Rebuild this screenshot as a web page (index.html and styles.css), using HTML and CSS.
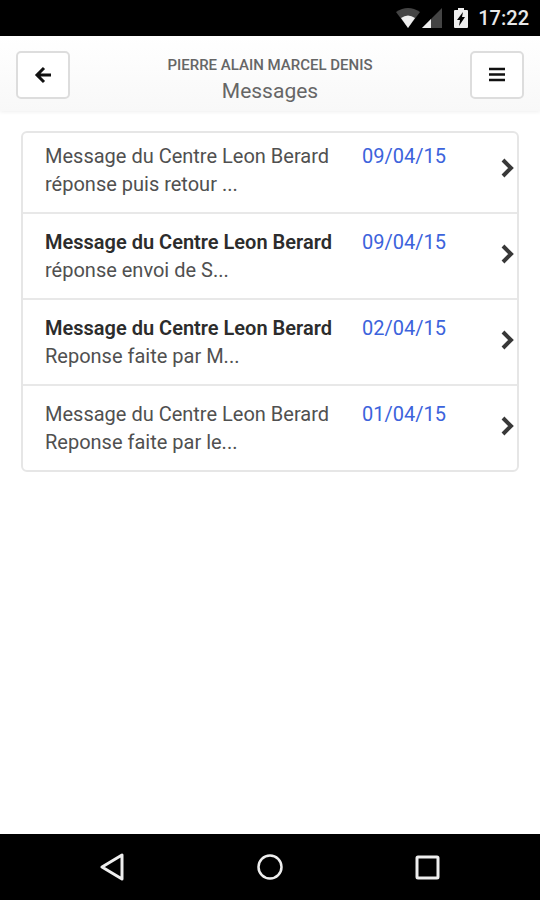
FILE: index.html
```html
<!DOCTYPE html>
<html lang="fr">
<head>
<meta charset="utf-8">
<meta name="viewport" content="width=device-width, initial-scale=1">
<title>Messages</title>
<link rel="stylesheet" href="styles.css">
</head>
<body>
<div class="status">
  <svg class="wifi" width="24" height="20" viewBox="0 0 24 20" aria-hidden="true">
    <path fill="#444" d="M0 4Q12-4 24 4L12 20Z"/>
    <path fill="#eee" d="M5 10Q12 5 19 10L12 20Z"/>
  </svg>
  <svg class="signal" width="20" height="20" viewBox="0 0 20 20" aria-hidden="true">
    <path fill="#444" d="M20 0V20H0Z"/>
    <path fill="#eee" d="M9 11V20H0Z"/>
  </svg>
  <svg class="battery" width="14" height="20" viewBox="0 0 14 20" aria-hidden="true">
    <path fill="#eee" d="M4 0H10V2H13Q14 2 14 3V19Q14 20 13 20H1Q0 20 0 19V3Q0 2 1 2H4Z"/>
    <path fill="#000" d="M9 4L3 12H6L5 18L11 9H8Z"/>
  </svg>
  <time class="clock">17:22</time>
</div>
<header class="bar">
  <button class="btn" type="button" aria-label="Retour">
    <svg width="18" height="18" viewBox="0 0 18 18" aria-hidden="true"><path d="M10 2L3 9L10 16M3 9H17" fill="none" stroke="#111" stroke-width="3"/></svg>
  </button>
  <div class="heading">
    <p class="patient">PIERRE ALAIN MARCEL DENIS</p>
    <h1 class="title">Messages</h1>
  </div>
  <button class="btn" type="button" aria-label="Menu">
    <svg width="18" height="18" viewBox="0 0 18 18" aria-hidden="true"><path d="M1 3H17M1 8.500H17M1 14H17" fill="none" stroke="#111" stroke-width="2.500"/></svg>
  </button>
</header>
<main class="content">
  <ul class="list">
    <li><a class="row" href="#m1">
      <span class="sender">Message du Centre Leon Berard</span><time class="date">09/04/15</time>
      <svg class="chevron" width="14" height="24" viewBox="0 0 14 24" aria-hidden="true"><path d="M2 2L10 10L2 18" fill="none" stroke="#383838" stroke-width="4"/></svg>
      <span class="preview">réponse puis retour ...</span>
    </a></li>
    <li><a class="row unread" href="#m2">
      <span class="sender">Message du Centre Leon Berard</span><time class="date">09/04/15</time>
      <svg class="chevron" width="14" height="24" viewBox="0 0 14 24" aria-hidden="true"><path d="M2 2L10 10L2 18" fill="none" stroke="#383838" stroke-width="4"/></svg>
      <span class="preview">réponse envoi de S...</span>
    </a></li>
    <li><a class="row unread" href="#m3">
      <span class="sender">Message du Centre Leon Berard</span><time class="date">02/04/15</time>
      <svg class="chevron" width="14" height="24" viewBox="0 0 14 24" aria-hidden="true"><path d="M2 2L10 10L2 18" fill="none" stroke="#383838" stroke-width="4"/></svg>
      <span class="preview">Reponse faite par M...</span>
    </a></li>
    <li><a class="row" href="#m4">
      <span class="sender">Message du Centre Leon Berard</span><time class="date">01/04/15</time>
      <svg class="chevron" width="14" height="24" viewBox="0 0 14 24" aria-hidden="true"><path d="M2 2L10 10L2 18" fill="none" stroke="#383838" stroke-width="4"/></svg>
      <span class="preview">Reponse faite par le...</span>
    </a></li>
  </ul>
</main>
<nav class="softkeys" aria-label="Navigation">
  <button class="key" type="button" aria-label="Précédent">
    <svg width="28" height="28" viewBox="0 0 28 28" aria-hidden="true"><path d="M23 2V26L3 14Z" fill="none" stroke="#eee" stroke-width="3" stroke-linejoin="round"/></svg>
  </button>
  <button class="key" type="button" aria-label="Accueil">
    <svg width="28" height="28" viewBox="0 0 28 28" aria-hidden="true"><circle cx="14" cy="14" r="11.500" fill="none" stroke="#eee" stroke-width="2.500"/></svg>
  </button>
  <button class="key" type="button" aria-label="Récents">
    <svg width="28" height="28" viewBox="0 0 28 28" aria-hidden="true"><rect x="4" y="4" width="21" height="21" rx="1" fill="none" stroke="#eee" stroke-width="3"/></svg>
  </button>
</nav>
</body>
</html>
```
FILE: styles.css
```css
* {
  box-sizing: border-box;
}

body {
  margin: 0;
  min-height: 100vh;
  display: flex;
  flex-direction: column;
  background: #fff;
  color: #505050;
  font-family: Roboto, sans-serif;
  font-size: 20px;
  line-height: 28px;
}

svg {
  display: block;
}

.status {
  display: flex;
  align-items: center;
  justify-content: flex-end;
  height: 36px;
  padding: 0 11px;
  background: #000;
}

.signal {
  margin-left: 2px;
}

.battery {
  margin-left: 12px;
}

.clock {
  margin-left: 10px;
  color: #e8e8e8;
  font-weight: 500;
}

.bar {
  display: flex;
  align-items: center;
  justify-content: space-between;
  height: 75px;
  padding: 3px 16px 0;
  background: linear-gradient(#fff, #f8f8f8);
  box-shadow: 0 1px 4px #0001;
}

.btn {
  display: flex;
  align-items: center;
  justify-content: center;
  width: 54px;
  height: 48px;
  padding: 0;
  border: 2px solid #ddd;
  border-radius: 5px;
  background: #fff;
}

.heading {
  padding-top: 8px;
  text-align: center;
}

.patient,
.title {
  margin: 0;
  color: #666;
}

.patient {
  font-size: 15px;
  font-weight: 500;
  line-height: 24px;
}

.title {
  font-size: 21px;
  font-weight: 400;
  line-height: 28px;
}

.content {
  flex: 1;
  padding: 20px 21px;
}

.list {
  margin: 0;
  padding: 0;
  list-style: none;
  border: 2px solid #e6e6e6;
  border-radius: 6px;
}

.list li + li {
  border-top: 2px solid #e8e8e8;
}

.row {
  display: grid;
  grid-template-columns: 317px 1fr 14px;
  align-items: center;
  padding: 14px 2px 14px 22px;
  color: inherit;
  text-decoration: none;
}

.list li:first-child .row {
  padding-top: 9px;
}

.unread .sender {
  color: #2c2c2c;
  font-weight: 600;
}

.date {
  color: #3c63dc;
}

.chevron {
  grid-column: 3;
  grid-row: 1 / 3;
}

.preview {
  grid-column: 1 / 3;
}

.softkeys {
  display: grid;
  grid-template-columns: repeat(3, 1fr);
  height: 66px;
  padding: 0 35px;
  background: #000;
}

.key {
  display: flex;
  align-items: center;
  justify-content: center;
  padding: 0;
  border: 0;
  background: none;
}
```
